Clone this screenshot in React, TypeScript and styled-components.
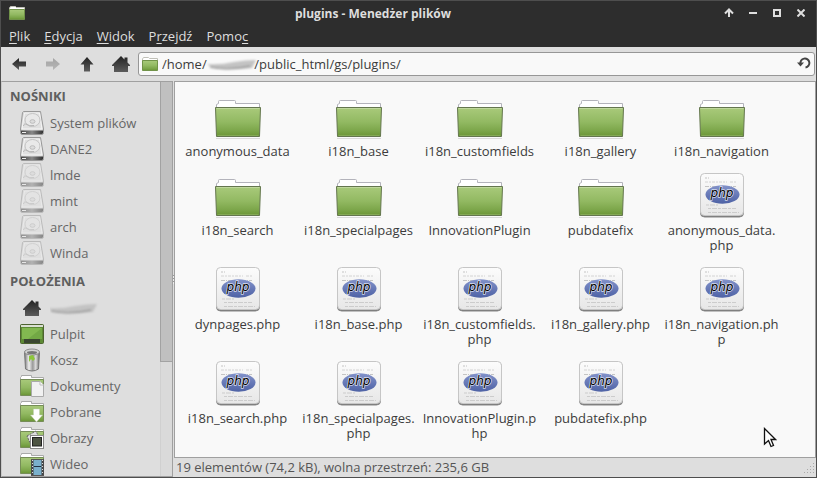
import React from "react";
import styled, { createGlobalStyle } from "styled-components";

const GlobalStyle = createGlobalStyle`
  * { box-sizing: border-box; }
  body { margin: 0; }
  body, button, input {
    font-family: "Open Sans", "Noto Sans", sans-serif;
    font-size: 13px;
    line-height: 15px;
  }
  button { border: 0; padding: 0; background: none; cursor: default; }
`;

const Window = styled.div`
  display: flex;
  flex-direction: column;
  height: 100vh;
  overflow: hidden;
  border: 1px solid #4e4e4e;
  background: #dedede;
  color: #3c3c3c;
`;

const TitleBar = styled.header`
  display: grid;
  grid-template-columns: 20px 1fr 96px;
  align-items: center;
  height: 24px;
  padding: 0 3px 0 8px;
  background: #2d2d2d;
  color: #dedede;
`;

const Title = styled.h1`
  margin: 0;
  font-size: 12px;
  line-height: 15px;
  text-align: center;
  font-weight: 700;
`;

const WindowButtons = styled.div`
  display: flex;
`;

const WindowButton = styled.button`
  display: grid;
  place-items: center;
  width: 24px;
  height: 24px;
  color: #dedede;
`;

const MenuBar = styled.nav`
  display: flex;
  align-items: center;
  gap: 14px;
  height: 22px;
  padding: 0 8px;
  background: #2d2d2d;
`;

const MenuItem = styled.button`
  color: #dedede;
  height: 20px;
  u { text-underline-offset: 2px; }
`;

const Toolbar = styled.div`
  display: flex;
  align-items: center;
  height: 34px;
  padding: 0 1px;
  background: #dedede;
`;

const ToolButton = styled.button<{ $faded?: boolean }>`
  display: grid;
  place-items: center;
  width: 34px;
  height: 34px;
  opacity: ${(p) => (p.$faded ? 0.3 : 1)};
`;

const PathField = styled.div`
  position: relative;
  display: flex;
  flex: 1;
  align-items: center;
  gap: 4px;
  height: 24px;
  padding: 0 3px;
  border: 1px solid #979797;
  border-radius: 3px;
  background: #f9f9f9;
`;

const PathInput = styled.input`
  flex: 1;
  min-width: 0;
  height: 20px;
  padding: 0;
  border: 0;
  outline: 0;
  background: none;
  color: #3c3c3c;
`;

const PathSmear = styled.svg`
  position: absolute;
  left: 67px;
  top: 4px;
`;

const Body = styled.div`
  display: flex;
  flex: 1;
  min-height: 0;
`;

const Sidebar = styled.aside`
  display: flex;
  width: 172px;
  flex: none;
  overflow: hidden;
  border: 1px solid #a0a0a0;
  border-left-color: #c9c9c9;
`;

const Places = styled.div`
  flex: 1;
  min-width: 0;
  padding-top: 2px;
`;

const Section = styled.section`
  padding-bottom: 3px;
`;

const SectionTitle = styled.h2`
  margin: 0;
  padding: 0 0 2px 8px;
  font-size: 13px;
  line-height: 24px;
  font-weight: 700;
  color: #5f5f5f;
`;

const Place = styled.button`
  display: flex;
  align-items: center;
  gap: 6px;
  width: 100%;
  height: 26px;
  padding-left: 18px;
  color: #666;
  text-align: left;
`;

const ScrollTrack = styled.div`
  width: 12px;
  border-left: 1px solid #d0d0d0;
  background: #dadada;
`;

const ScrollThumb = styled.div`
  height: 71%;
  margin-left: -1px;
  border: 1px solid #a2a2a2;
  border-width: 0 0 1px 1px;
  background: #c0c0c0;
`;

const Splitter = styled.div`
  width: 1px;
  flex: none;
  display: flex;
  align-items: center;
  &::before {
    content: "";
    width: 1px;
    height: 9px;
    background: repeating-linear-gradient(#999 0 1px, #eee 1px 3px);
  }
`;

const MainColumn = styled.div`
  display: flex;
  flex: 1;
  flex-direction: column;
  min-width: 0;
`;

const FilePane = styled.main`
  position: relative;
  display: grid;
  flex: 1;
  min-height: 0;
  grid-template-columns: repeat(auto-fill, 121px);
  align-content: start;
  row-gap: 12px;
  padding: 10px 2px 0;
  overflow: hidden;
  border: 1px solid #a0a0a0;
  background: #f9f9f9;
`;

const FileItem = styled.button`
  display: flex;
  flex-direction: column;
  align-items: center;
  justify-content: flex-start;
  gap: 4px;
  color: #3c3c3c;
`;

const FileName = styled.span`
  white-space: pre;
`;

const Pointer = styled.svg`
  position: absolute;
  right: 38px;
  bottom: 9px;
`;

const StatusBar = styled.footer`
  display: flex;
  align-items: center;
  justify-content: space-between;
  height: 19px;
  padding-left: 2px;
  color: #555;
`;

const Definitions = styled.svg`
  display: block;
`;

const Gradients = () => (
  <Definitions width="0" height="0" aria-hidden="true">
    <defs>
      <linearGradient id="green" x1="0" y1="0" x2="0" y2="1">
        <stop offset="0" stopColor="#a9ca7b" />
        <stop offset="0.5" stopColor="#92b962" />
        <stop offset="0.8" stopColor="#7ca64a" />
        <stop offset="1" stopColor="#6a9435" />
      </linearGradient>
      <linearGradient id="dark" x1="0" y1="0" x2="0" y2="1">
        <stop offset="0" stopColor="#222" />
        <stop offset="1" stopColor="#5c5c5c" />
      </linearGradient>
      <linearGradient id="paper" x1="0" y1="0" x2="0" y2="1">
        <stop offset="0" stopColor="#fcfcfc" />
        <stop offset="1" stopColor="#e7e7e7" />
      </linearGradient>
      <linearGradient id="oval" x1="0" y1="0" x2="0" y2="1">
        <stop offset="0" stopColor="#8292ca" />
        <stop offset="1" stopColor="#4e62a5" />
      </linearGradient>
      <linearGradient id="steel" x1="0" y1="0" x2="1" y2="0">
        <stop offset="0" stopColor="#777" />
        <stop offset="0.3" stopColor="#f0f0f0" />
        <stop offset="0.55" stopColor="#999" />
        <stop offset="0.75" stopColor="#ddd" />
        <stop offset="1" stopColor="#666" />
      </linearGradient>
      <linearGradient id="edge" x1="0" y1="0" x2="1" y2="0">
        <stop offset="0" stopColor="#444" />
        <stop offset="0.5" stopColor="#888" />
        <stop offset="1" stopColor="#333" />
      </linearGradient>
      <filter id="soft" x="-10%" y="-30%" width="120%" height="160%">
        <feGaussianBlur stdDeviation="0.8" />
      </filter>
    </defs>
  </Definitions>
);

const BigFolder = () => (
  <svg width="48" height="48" viewBox="0 0 48 48">
    <path d="M2 46.500H46" stroke="#000" strokeOpacity="0.12" />
    <path d="M2.500 17V12.500L4.500 11.500V9.500Q4.500 8.500 5.500 8.500H20.500Q21.500 8.500 21.500 9.500V11.500H45.500V17Z" fill="#fff" stroke="#b3b3bb" />
    <path d="M1.500 15.500H46.500L45.500 44.500H2.500Z" fill="url(#green)" stroke="#64764e" />
    <path d="M2.500 16.500H45.500" stroke="#bfd79c" />
    <path d="M3.500 43.500H44.500" stroke="#94b56a" strokeOpacity="0.6" />
  </svg>
);

const PhpFile = () => (
  <svg width="48" height="48" viewBox="0 0 48 48">
    <rect x="2.500" y="3.500" width="43" height="42.500" rx="4" fill="#777" stroke="#888" />
    <rect x="2.500" y="2.500" width="43" height="42" rx="4" fill="url(#paper)" stroke="#c6c6c6" />
    <g stroke="#c4c4c4" strokeWidth="1" fill="none">
      <path d="M7 7H11" strokeDasharray="2 1" />
      <path d="M7 11H29M32 11H38" strokeDasharray="3 1 2 1" strokeOpacity="0.7" />
      <path d="M7 15.500H38" strokeDasharray="4 1 1 1" />
      <path d="M8 34H20M10 37.500H38M10 41.500H41" strokeDasharray="3 1 5 1" strokeOpacity="0.8" />
    </g>
    <ellipse cx="24.500" cy="23.500" rx="17" ry="9.300" fill="url(#oval)" />
    <text x="24" y="26" textAnchor="middle" fontFamily="DejaVu Sans" fontStyle="italic" fontSize="12" fill="#000" stroke="#fff" strokeOpacity="0.75" strokeWidth="1.500" paintOrder="stroke">php</text>
  </svg>
);

const SmallFolder = () => (
  <svg width="16" height="14" viewBox="0 0 16 14">
    <path d="M0.500 5V2L1.500 0.500H6.500L7.500 1.500H15.500V5Z" fill="#fff" stroke="#c0c0b8" />
    <path d="M0.500 3.500H15.500V13.500H0.500Z" fill="url(#green)" stroke="#719349" />
  </svg>
);

const DriveIcon = ({ faded }: { faded?: boolean }) => (
  <svg width="24" height="24" viewBox="0 0 24 24" opacity={faded ? 0.5 : 1}>
    <path d="M3.500 0.500H20.500L23.500 18V21.500Q23.500 23.500 22 23.500H2Q0.500 23.500 0.500 21.500V18L2.500 1.500Z" fill="#d6d6d6" stroke="#999" />
    <path d="M1 19.500H23V21.500Q23 23 21.500 23H2.500Q1 23 1 21.500Z" fill="url(#edge)" />
    <path d="M4.500 2H19.500L22 18H2Z" fill="#e0e0e0" stroke="#f6f6f6" />
    <ellipse cx="12.500" cy="9" rx="7.500" ry="6.500" fill="#e9e9e9" stroke="#c4c4c4" />
    <ellipse cx="12.500" cy="10.500" rx="2.500" ry="1.800" fill="#ddd" stroke="#bbb" />
    <path d="M3.500 15Q4 12 7 13.500Q9 15.500 14 14.500" fill="none" stroke="#b4b4b4" />
    <path d="M2 21.500H6" stroke="#eee" />
  </svg>
);

const HomeShape = ({ size, box }: { size: number; box: number }) => (
  <svg width={box} height={box} viewBox={`0 0 ${box} ${box}`}>
    <svg x={(box - size) / 2} y={(box - size) / 2} width={size} height={size} viewBox="0 0 18 18">
      <path d="M9 1L12.500 4.500V2.500H15.500V7.500L18 10V11H16V17H2V11H0V10Z" fill="url(#dark)" />
    </svg>
  </svg>
);

const HomePlace = () => <HomeShape size={18} box={24} />;

const DesktopIcon = () => (
  <svg width="24" height="24" viewBox="0 0 24 24">
    <rect x="0.500" y="2.500" width="23" height="19" rx="1" fill="#5d8a35" stroke="#4d6330" />
    <rect x="1" y="3" width="22" height="2" fill="#d9dfd2" />
    <path d="M2 6H22V17H2Z" fill="#82b850" />
    <path d="M22 6V17H8Z" fill="#72a845" />
    <rect x="4" y="17" width="16" height="4" fill="#3a4630" />
  </svg>
);

const TrashIcon = () => (
  <svg width="24" height="24" viewBox="0 0 24 24">
    <path d="M4.500 4L5.500 21Q12 25 18.500 21L19.500 4Z" fill="url(#steel)" stroke="#777" />
    <ellipse cx="12" cy="4" rx="7.500" ry="3" fill="#d4d4d4" stroke="#8c8c8c" />
    <ellipse cx="12" cy="4.500" rx="5" ry="1.500" fill="#777" />
    <path d="M9 8L13 7L15 11L13 13L11 11L9 14Z" fill="#8cc63a" />
  </svg>
);

const PlaceFolder = ({ children }: { children: React.ReactNode }) => (
  <svg width="24" height="24" viewBox="0 0 24 24">
    <path d="M0.500 7V3.500L1.500 2.500V1.500H11.500V3.500H23.500V7Z" fill="#fff" stroke="#a9a9a9" />
    <path d="M0.500 5.500H23.500V21.500H0.500Z" fill="url(#green)" stroke="#768d58" />
    {children}
  </svg>
);

const DocumentsIcon = () => (
  <PlaceFolder>
    <path d="M11.500 7.500H20L23.500 11V22.500H11.500Z" fill="#f1f1f1" stroke="#aaa" />
    <path d="M20 7.500V11H23.500" fill="#fff" stroke="#bbb" />
  </PlaceFolder>
);

const DownloadsIcon = () => (
  <PlaceFolder>
    <path d="M13.500 9H19.500V15H22.500L16.500 22L10.500 15H13.500Z" fill="#fff" stroke="#c3d0b5" strokeWidth="0.500" />
  </PlaceFolder>
);

const PicturesIcon = () => (
  <PlaceFolder>
    <path d="M7 10L16 5L20 14L11 19Z" fill="#ddd" stroke="#666" strokeDasharray="2 1" />
    <rect x="10.500" y="9.500" width="13" height="13" fill="#fff" stroke="#888" />
    <rect x="12.500" y="11.500" width="9" height="8.500" fill="#4d5443" stroke="#222" />
  </PlaceFolder>
);

const VideoIcon = () => (
  <PlaceFolder>
    <rect x="11.500" y="7.500" width="12" height="16" fill="#7ab0cc" stroke="#555" />
    <path d="M12.500 8V23M22.500 8V23" stroke="#444" strokeWidth="2" />
    <path d="M12.500 8V23M22.500 8V23" stroke="#ddd" strokeDasharray="1 2" />
    <path d="M14 14.500H21" stroke="#234" />
  </PlaceFolder>
);

const SmearShape = () => (
  <g filter="url(#soft)">
    <path d="M1 7Q14 8 28 5Q40 3 50 3L46 11Q30 13 14 12Q5 11 1 7Z" fill="#c3c3c3" />
    <path d="M4 10Q22 14 44 9" fill="none" stroke="#9b9b9b" strokeWidth="1.500" />
  </g>
);

const ArrowIcon = ({ d }: { d: string }) => (
  <svg width="16" height="16" viewBox="0 0 16 16">
    <path d={d} fill="url(#dark)" />
  </svg>
);

const menus = [
  ["", "P", "lik"],
  ["", "E", "dycja"],
  ["", "W", "idok"],
  ["P", "r", "zejdź"],
  ["Pomo", "c", ""],
];

const drives = [
  { name: "System plików", mounted: true },
  { name: "DANE2", mounted: true },
  { name: "lmde", mounted: false },
  { name: "mint", mounted: false },
  { name: "arch", mounted: false },
  { name: "Winda", mounted: false },
];

const places = [
  { name: "Pulpit", Icon: DesktopIcon },
  { name: "Kosz", Icon: TrashIcon },
  { name: "Dokumenty", Icon: DocumentsIcon },
  { name: "Pobrane", Icon: DownloadsIcon },
  { name: "Obrazy", Icon: PicturesIcon },
  { name: "Wideo", Icon: VideoIcon },
];

const folders = [
  "anonymous_data",
  "i18n_base",
  "i18n_customfields",
  "i18n_gallery",
  "i18n_navigation",
  "i18n_search",
  "i18n_specialpages",
  "InnovationPlugin",
  "pubdatefix",
];

const files = [
  "anonymous_data.\nphp",
  "dynpages.php",
  "i18n_base.php",
  "i18n_customfields.\nphp",
  "i18n_gallery.php",
  "i18n_navigation.ph\np",
  "i18n_search.php",
  "i18n_specialpages.\nphp",
  "InnovationPlugin.p\nhp",
  "pubdatefix.php",
];

export default function App() {
  return (
    <>
      <GlobalStyle />
      <Gradients />
      <Window>
        <TitleBar>
          <SmallFolder />
          <Title>plugins - Menedżer plików</Title>
          <WindowButtons>
            <WindowButton aria-label="Zwiń">
              <svg width="10" height="10" viewBox="0 0 10 10" fill="none" stroke="currentColor" strokeWidth="2">
                <path d="M5 9V2M1 5.500L5 1.500L9 5.500" />
              </svg>
            </WindowButton>
            <WindowButton aria-label="Minimalizuj">
              <svg width="8" height="10" viewBox="0 0 8 10"><path d="M0 4H8V6H0Z" fill="currentColor" /></svg>
            </WindowButton>
            <WindowButton aria-label="Maksymalizuj">
              <svg width="8" height="8" viewBox="0 0 8 8"><rect x="1" y="1" width="6" height="6" fill="none" stroke="currentColor" strokeWidth="2" /></svg>
            </WindowButton>
            <WindowButton aria-label="Zamknij">
              <svg width="8" height="8" viewBox="0 0 8 8"><path d="M0.500 0.500L7.500 7.500M7.500 0.500L0.500 7.500" stroke="currentColor" strokeWidth="2" /></svg>
            </WindowButton>
          </WindowButtons>
        </TitleBar>

        <MenuBar>
          {menus.map(([before, key, after]) => (
            <MenuItem key={before + key}>
              {before}
              <u>{key}</u>
              {after}
            </MenuItem>
          ))}
        </MenuBar>

        <Toolbar>
          <ToolButton aria-label="Wstecz">
            <ArrowIcon d="M1 8L8 2V5.500H15V10.500H8V14Z" />
          </ToolButton>
          <ToolButton aria-label="Dalej" $faded>
            <ArrowIcon d="M15 8L8 2V5.500H1V10.500H8V14Z" />
          </ToolButton>
          <ToolButton aria-label="W górę">
            <ArrowIcon d="M8 1L14.500 8.500H11V15.500H5V8.500H1.500Z" />
          </ToolButton>
          <ToolButton aria-label="Katalog domowy">
            <HomeShape size={18} box={18} />
          </ToolButton>
          <PathField>
            <SmallFolder />
            <PathInput aria-label="Ścieżka" defaultValue={"/home/\u2003\u2003\u2003\u2002\u2009/public_html/gs/plugins/"} />
            <PathSmear width="54" height="15" viewBox="0 0 54 15" aria-hidden="true">
              <SmearShape />
            </PathSmear>
            <button aria-label="Odśwież">
              <svg width="14" height="14" viewBox="0 0 14 14">
                <path d="M3.500 8A4.500 4.500 0 1 1 8.500 11.500" fill="none" stroke="#444" strokeWidth="2" />
                <path d="M0 6.500H7L3.500 10.500Z" fill="#444" />
              </svg>
            </button>
          </PathField>
        </Toolbar>

        <Body>
          <Sidebar>
            <Places>
              <Section>
                <SectionTitle>NOŚNIKI</SectionTitle>
                {drives.map((drive) => (
                  <Place key={drive.name}>
                    <DriveIcon faded={!drive.mounted} />
                    {drive.name}
                  </Place>
                ))}
              </Section>
              <Section>
                <SectionTitle>POŁOŻENIA</SectionTitle>
                <Place aria-label="Katalog domowy">
                  <HomePlace />
                  <svg width="54" height="15" viewBox="3 0 54 15" aria-hidden="true">
                    <SmearShape />
                  </svg>
                </Place>
                {places.map(({ name, Icon }) => (
                  <Place key={name}>
                    <Icon />
                    {name}
                  </Place>
                ))}
              </Section>
            </Places>
            <ScrollTrack>
              <ScrollThumb />
            </ScrollTrack>
          </Sidebar>
          <Splitter />
          <MainColumn>
            <FilePane>
              {folders.map((name) => (
                <FileItem key={name}>
                  <BigFolder />
                  <FileName>{name}</FileName>
                </FileItem>
              ))}
              {files.map((name) => (
                <FileItem key={name}>
                  <PhpFile />
                  <FileName>{name}</FileName>
                </FileItem>
              ))}
              <Pointer width="14" height="21" viewBox="0 0 14 21" aria-hidden="true">
                <path d="M1.500 1.500V17L5.500 13.500L8 19.500L10.500 18.500L8 12.500H12.500Z" fill="#fff" stroke="#111" strokeWidth="1.300" />
              </Pointer>
            </FilePane>
            <StatusBar>
              <span>19 elementów (74,2 kB), wolna przestrzeń: 235,6 GB</span>
              <svg width="12" height="12" viewBox="0 0 12 12" stroke="#aaa" strokeDasharray="1 2" aria-hidden="true">
                <path d="M9 1.500H12M6 4.500H12M3 7.500H12M0 10.500H12" />
              </svg>
            </StatusBar>
          </MainColumn>
        </Body>
      </Window>
    </>
  );
}
